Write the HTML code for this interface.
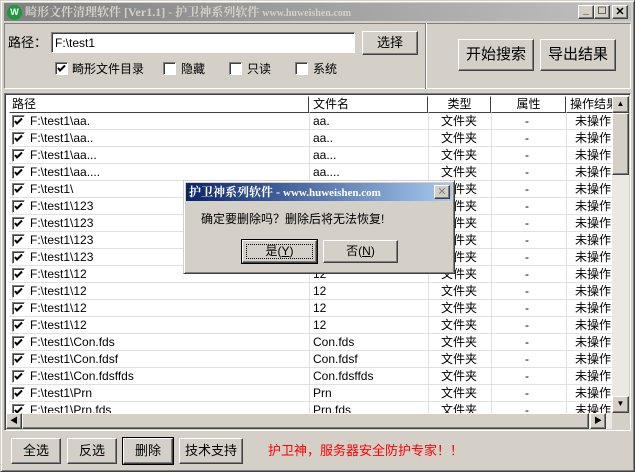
<!DOCTYPE html><html><head><meta charset="utf-8"><style>
*{box-sizing:border-box;margin:0;padding:0}
body{width:635px;height:472px;background:#d4d0c8;font-family:"Liberation Sans","Noto Sans CJK SC",sans-serif;font-size:12px;line-height:14px;position:relative;overflow:hidden;color:#000}
.a{position:absolute;white-space:nowrap}
.btn{position:absolute;background:#d4d0c8;border:1px solid;border-color:#fff #404040 #404040 #fff;box-shadow:inset -1px -1px 0 #808080;text-align:center;font-size:13px}
.sunk{position:absolute;border:1px solid;border-color:#808080 #fff #fff #808080}
.cb{position:absolute;width:13px;height:13px;background:#fff;border:1px solid;border-color:#808080 #fff #fff #808080;box-shadow:inset 1px 1px 0 #404040}
.cb svg{position:absolute;left:1px;top:1px}
.row{position:absolute;left:9px;width:604px;height:17px;border-bottom:1px solid #e0e0e0;background:#fff}
.row span{position:absolute;top:1px;line-height:15px;white-space:nowrap}
.row i{position:absolute;top:0;height:17px;border-left:1px solid #e0e0e0}
.hd{position:absolute;top:96px;height:17px;border:1px solid;border-color:#fff #404040 #404040 #fff;text-align:center;font-size:12px;line-height:14px}
</style></head><body>
<div class="a" style="left:0;top:0;width:635px;height:472px;border:1px solid;border-color:#d4d0c8 #404040 #404040 #d4d0c8;box-shadow:inset 1px 1px 0 #fff,inset -1px -1px 0 #808080"></div>
<div class="a" style="left:4px;top:3px;width:627px;height:18px;background:linear-gradient(90deg,#808080,#c0c0c0)"></div>
<div class="a" style="left:7px;top:5px;width:15px;height:15px;border-radius:50%;background:#1a9a3a;color:#fff;font-size:9px;text-align:center;line-height:15px;font-weight:bold">W</div>
<div class="a" style="left:25px;top:5px;color:#d4d0c8;font-weight:bold;font-size:12px;font-family:'Liberation Serif','Noto Serif CJK SC',serif">畸形文件清理软件 [Ver1.1] - 护卫神系列软件 <span style="font-size:10px">www.huweishen.com</span></div>
<div class="btn" style="left:578px;top:5px;width:16px;height:14px;font-size:10px;line-height:10px;font-weight:bold">_</div>
<div class="btn" style="left:594px;top:5px;width:16px;height:14px;font-size:10px;line-height:12px">☐</div>
<div class="btn" style="left:612px;top:5px;width:16px;height:14px;font-size:11px;line-height:12px;font-weight:bold">✕</div>
<div class="a" style="left:4px;top:23px;width:627px;height:66px;border:1px solid;border-color:#808080 #fff #fff #808080"></div>
<div class="a" style="left:425px;top:23px;width:2px;height:66px;border-left:1px solid #808080;border-right:1px solid #fff"></div>
<div class="a" style="left:8px;top:36px;font-size:13px">路径：</div>
<div class="sunk" style="left:51px;top:32px;width:304px;height:21px;background:#fff;box-shadow:inset 1px 1px 0 #404040;padding:3px 3px;font-size:12px">F:\test1</div>
<div class="btn" style="left:362px;top:31px;width:56px;height:24px;line-height:21px">选择</div>
<div class="cb" style="left:55px;top:62px"><svg width="9" height="9"><path d="M1 4 L3 6.5 L8 1.5" stroke="#000" stroke-width="2" fill="none"/></svg></div>
<div class="a" style="left:72px;top:62px;font-size:12px">畸形文件目录</div>
<div class="cb" style="left:163px;top:62px"></div><div class="a" style="left:181px;top:62px">隐藏</div>
<div class="cb" style="left:229px;top:62px"></div><div class="a" style="left:247px;top:62px">只读</div>
<div class="cb" style="left:295px;top:62px"></div><div class="a" style="left:313px;top:62px">系统</div>
<div class="btn" style="left:458px;top:39px;width:76px;height:32px;line-height:29px;font-size:15px">开始搜索</div>
<div class="btn" style="left:540px;top:39px;width:76px;height:32px;line-height:29px;font-size:15px">导出结果</div>
<div class="a" style="left:4px;top:93px;width:627px;height:338px;border:1px solid;border-color:#808080 #fff #fff #808080;box-shadow:inset 1px 1px 0 #404040"></div>
<div class="a" style="left:6px;top:95px;width:623px;height:334px;background:#fff"></div>
<div class="hd" style="left:9px;width:300px;text-align:left;padding-left:2px">路径</div>
<div class="hd" style="left:309px;width:119px;text-align:left;padding-left:3px">文件名</div>
<div class="hd" style="left:428px;width:63px">类型</div>
<div class="hd" style="left:491px;width:75px">属性</div>
<div class="hd" style="left:566px;width:50px;overflow:hidden;white-space:nowrap;text-align:left;padding-left:3px">操作结果</div>
<div id="rows"></div>
<script>
var d=[["aa.","aa."],["aa..","aa.."],["aa...","aa..."],["aa....","aa...."],["",""],["123",""],["123",""],["123",""],["123",""],["12","12"],["12","12"],["12","12"],["12","12"],["Con.fds","Con.fds"],["Con.fdsf","Con.fdsf"],["Con.fdsffds","Con.fdsffds"],["Prn","Prn"],["Prn.fds","Prn.fds"]];
var h="";d.forEach(function(r,i){var t=113+i*17;h+='<div class="row" style="top:'+t+'px"><div class="cb" style="left:3px;top:2px"><svg width="9" height="9"><path d="M1 4 L3 6.5 L8 1.5" stroke="#000" stroke-width="2" fill="none"/></svg></div><span style="left:21px">F:\\test1\\'+r[0]+'</span><i style="left:300px"></i><span style="left:304px">'+r[1]+'</span><i style="left:419px"></i><span style="left:432px">文件夹</span><i style="left:482px"></i><span style="left:516px">-</span><i style="left:557px"></i><span style="left:566px">未操作</span></div>'});
document.getElementById("rows").innerHTML=h;
</script>
<div class="a" style="left:612px;top:96px;width:17px;height:317px;background:#ece9e4"></div>
<div class="btn" style="left:612px;top:96px;width:17px;height:17px;font-size:8px;line-height:14px">▲</div>
<div class="btn" style="left:612px;top:113px;width:17px;height:62px"></div>
<div class="btn" style="left:612px;top:396px;width:17px;height:17px;font-size:8px;line-height:14px">▼</div>
<div class="a" style="left:6px;top:413px;width:606px;height:16px;background:#ece9e4"></div>
<div class="btn" style="left:6px;top:413px;width:16px;height:16px;font-size:8px;line-height:13px">◀</div>
<div class="btn" style="left:22px;top:413px;width:567px;height:16px"></div>
<div class="btn" style="left:590px;top:413px;width:16px;height:16px;font-size:8px;line-height:13px">▶</div>
<div class="a" style="left:612px;top:413px;width:17px;height:16px;background:#d4d0c8"></div>
<div class="btn" style="left:11px;top:438px;width:50px;height:26px;line-height:23px">全选</div>
<div class="btn" style="left:67px;top:438px;width:50px;height:26px;line-height:23px">反选</div>
<div class="btn" style="left:123px;top:438px;width:50px;height:26px;line-height:23px;outline:1px solid #000">删除</div>
<div class="btn" style="left:179px;top:438px;width:64px;height:26px;line-height:23px">技术支持</div>
<div class="a" style="left:268px;top:444px;color:#f00;font-size:13px">护卫神，服务器安全防护专家！！</div>
<div class="a" style="left:183px;top:180px;width:272px;height:94px;background:#d4d0c8;border:1px solid;border-color:#d4d0c8 #404040 #404040 #d4d0c8;box-shadow:inset 1px 1px 0 #fff,inset -1px -1px 0 #808080"></div>
<div class="a" style="left:186px;top:183px;width:266px;height:18px;background:linear-gradient(90deg,#0a246a,#a6caf0)"></div>
<div class="a" style="left:189px;top:185px;color:#fff;font-weight:bold;font-size:12px;font-family:'Liberation Serif','Noto Serif CJK SC',serif">护卫神系列软件 - <span style="font-size:11px">www.huweishen.com</span></div>
<div class="btn" style="left:434px;top:185px;width:16px;height:14px;font-size:11px;line-height:12px;color:#808080">✕</div>
<div class="a" style="left:201px;top:212px;font-size:12px">确定要删除吗？删除后将无法恢复!</div>
<div class="btn" style="left:242px;top:240px;width:75px;height:23px;line-height:20px;outline:1px solid #000;font-size:12px">是(<u>Y</u>)</div>
<div class="a" style="left:246px;top:244px;width:67px;height:15px;border:1px dotted #000"></div>
<div class="btn" style="left:323px;top:240px;width:75px;height:23px;line-height:20px;font-size:12px">否(<u>N</u>)</div>
</body></html>
